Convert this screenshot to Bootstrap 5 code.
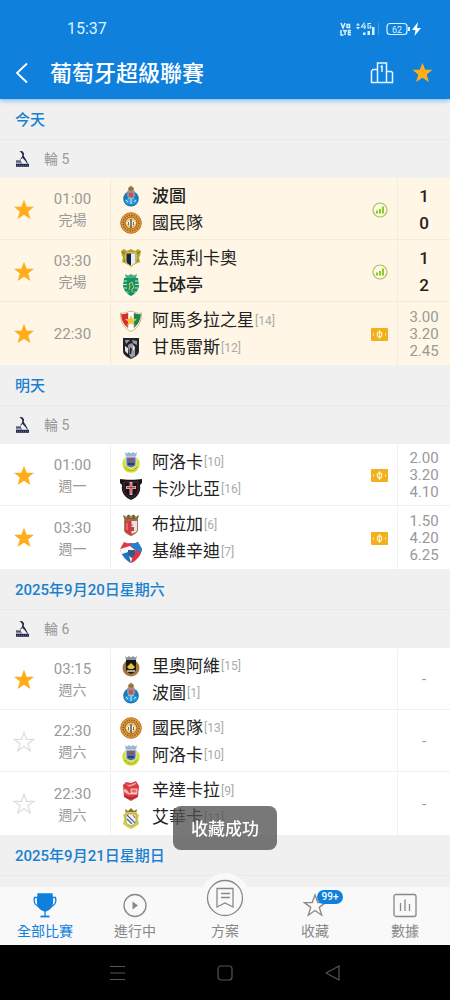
<!DOCTYPE html>
<html lang="zh-Hant">
<head>
<meta charset="utf-8">
<meta name="viewport" content="width=device-width, initial-scale=1">
<title>葡萄牙超級聯賽</title>
<link href="https://cdn.jsdelivr.net/npm/bootstrap@5.3.0/dist/css/bootstrap.min.css" rel="stylesheet">
<style>
  :root { --brand: #0f80dc; --gold: #ffae1a; --muted: #999; }
  body { font-family: Roboto, "Noto Sans CJK TC", sans-serif; color: #222; background: #f0f0f0; }
  button { border: 0; background: none; padding: 0; color: inherit; }
  svg { display: block; flex-shrink: 0; }
  a { text-decoration: none; color: inherit; }
  .topbar { background: var(--brand); color: #fff; box-shadow: 0 1px 5px #0f80dc99; padding-bottom: 1px; z-index: 2; }
  .statusbar { height: 48px; padding: 10px 28px 0 67px; font-size: 16px; color: #d9f2ff; }
  .appbar { height: 50px; padding: 0 16px 0 12px; }
  .league-title { font-size: 22px; line-height: 30px; font-weight: 500; padding-top: 2px; margin-left: 18px; }
  .league-star { color: var(--gold); }
  .day-title { height: 41px; padding: 2px 15px 0; font-size: 15px; font-weight: 500; color: #1a80cf; border-bottom: 1px solid #e9e9e9; }
  .round-line { height: 38px; padding: 0 15px; gap: 14px; font-size: 14px; color: var(--muted); }
  .match { height: 62px; padding-top: 1px; background: #fff; box-shadow: inset 0 -1px #f0f0f0; }
  .match:last-child { height: 63px; box-shadow: none; }
  .match.today { background: #fff6e6; }
  .match.today:not(:last-child) { box-shadow: inset 0 -1px #f3ebdd; }
  .star-btn { width: 48px; color: var(--gold); }
  .star-btn.off { color: #ddd; }
  .kickoff { width: 49px; margin-right: 13px; font-size: 15px; line-height: 21px; color: var(--muted); padding-top: 1px; }
  .kickoff span { font-size: 14px; }
  .sides { border-left: 1px solid #f0f0f0; padding-left: 9px; }
  .today .sides, .today .result { border-color: #f3ebdd; }
  .side { height: 27px; gap: 10px; font-size: 17px; line-height: 27px; }
  .side small { font-size: 12px; color: #aaa; margin-left: -9px; padding-top: 1px; }
  .won { font-weight: 500; }
  .tag { margin-right: 9px; }
  .result { width: 53px; border-left: 1px solid #f0f0f0; font-size: 15px; line-height: 17px; color: var(--muted); }
  .result.final { font-size: 17px; line-height: 27px; font-weight: 500; color: #222; }
  .tabs { height: 58px; background: #f9f9f9; color: #888; font-size: 14px; }
  .tab { gap: 2px; padding-top: 6px; line-height: 22px; }
  .tab.on { color: var(--brand); }
  .plan { margin-top: -20px; gap: 0; }
  .plan svg { background: #f9f9f9; border-radius: 50%; margin-bottom: -3px; }
  .count { position: absolute; left: 14px; top: -3px; background: var(--brand); color: #fff; font-size: 10px; line-height: 14px; font-weight: 500; border-radius: 7px; width: 26px; }
  .sysnav { height: 55px; background: #000; color: #555; padding: 0 108px; }
  .notice { position: fixed; left: 50%; bottom: 150px; transform: translateX(-50%); background: #505050c4; color: #fff; font-size: 17px; line-height: 24px; font-weight: 500; padding: 11px 18px 9px; border-radius: 8px; white-space: nowrap; z-index: 3; }
</style>
</head>
<body>
<svg width="0" height="0" class="position-absolute" aria-hidden="true">
  <symbol id="star" viewBox="0 0 22 22"><path fill="currentColor" d="M11 .8l2.700 7h7.300l-5.800 4.700 2.200 7.600L11 15.700l-6.400 4.400 2.200-7.600L1 7.800h7.300z"/></symbol>
  <symbol id="star-o" viewBox="0 0 22 22"><path fill="none" stroke="currentColor" stroke-width="1.200" d="M11 1.200l2.500 7.100h7.300l-5.900 4.400 2.300 7.200L11 15.600l-6.200 4.300 2.300-7.200L1.200 8.300h7.300z"/></symbol>
  <symbol id="liga" viewBox="0 0 15 18"><g fill="#20284a"><path d="M4.500 1l3 .2 1.600 2.200L8.700 6l2 3 2.300 4.500-.6.300L9.500 10 7 7.500 7.300 4z"/><path d="M7.300 6.500L4.500 10l2.500-1.500z"/><path d="M1 10.500h5v1.300H1zM1 12.500h6v.8H1z"/><path d="M1 13.800h13v3H1z"/></g><path stroke="#9aa0b8" stroke-width=".6" d="M2 15.300h11" stroke-dasharray="1 1"/></symbol>
  <symbol id="porto" viewBox="0 0 22 22"><circle cx="11" cy="13.800" r="7.800" fill="#1678bd"/><path d="M5 14.500c2-2 10-2 12 0v3c-3 3-9 3-12 0z" fill="#2f9bd6"/><path d="M6 15l2 2m3-3v5m5-4l-2 2m-6-4h6" stroke="#d9edf8" stroke-width="1"/><path d="M7.500 5.500h7l.8 5.500c-1.500 3-7 3-8.500 0z" fill="#9b8f94"/><path d="M9 8h4v4H9z" fill="#cf4e55"/><path d="M8 4c0-2 2-2.500 3-3.500C12 1.500 14 2 14 4l-.7 2H8.700z" fill="#a98545"/><path d="M9 4h4" stroke="#4c6b45"/></symbol>
  <symbol id="nacional" viewBox="0 0 22 22"><circle cx="11" cy="11" r="10.300" fill="#e7a12f" stroke="#b9742b"/><circle cx="11" cy="11" r="8" fill="none" stroke="#8c5740" stroke-width="1.500" stroke-dasharray="1.500 1"/><circle cx="11" cy="11" r="6" fill="#efc36a" stroke="#94592f"/><path d="M5.500 11l5-3v6zm11 0l-5-3v6z" fill="#fff2d4"/><path d="M11 7v9" stroke="#3d4b68" stroke-width="1.300"/><path d="M8.500 10v3m5-3v3" stroke="#3d4b68" stroke-width=".8"/></symbol>
  <symbol id="famalicao" viewBox="0 0 22 22"><path d="M1 4l3-2 3 2 4-2 4 2 3-2 3 2-1 5-1 1 1 5-5 2-4 3-4-3-5-2 1-5-1-1z" fill="#b4a32e"/><path d="M2 5l4 2m14-2l-4 2M4 14l2-1m12 1l-2-1" stroke="#6e6727"/><path d="M6 6h10v8c0 3-3 4-5 5-2-1-5-2-5-5z" fill="#18233f" stroke="#eadb63"/><path d="M11 6.500h4.500v8c0 2-2 3-4.500 4z" fill="#e7edf3"/></symbol>
  <symbol id="sporting" viewBox="0 0 22 22"><path d="M5 0l3 1.500L11 0l3 1.500L17 0l-1 4H6z" fill="#4cac80"/><path d="M4 4h14l1 8c-1 5-4 8-8 10-4-2-7-5-8-10z" fill="#149260"/><path d="M3.500 7h15M3 10.500h16M3.500 14h15M6 18h10" stroke="#d9efe5" stroke-width=".9"/><path d="M7 6h8v11l-4 3-4-3z" fill="#159260"/><path d="M9 16l1-4-1-2 3-2 1 3 1 3-2 1v3" fill="none" stroke="#d7c768" stroke-width="1"/></symbol>
  <symbol id="estrela" viewBox="0 0 22 22"><path d="M.5 3c4 1 6.500-1 10.500-2 4 1 6.500 3 10.500 2 0 8-2.500 15-10.500 18.500C3 18 .5 11 .5 3z" fill="#fff" stroke="#d6b27d"/><path d="M1.200 4c3 .5 5-.5 7-1v15C3 14.500 1.200 9 1.200 4z" fill="#d72d31"/><path d="M20.800 4c-3 .5-5-.5-7-1v15c5-3.500 7-9 7-14z" fill="#198754"/><path d="M11 5l1.800 4H17l-3.300 3 1.300 4-4-2.500L7 16l1.300-4L5 9h4.200z" fill="#f5bf42"/></symbol>
  <symbol id="vitoria" viewBox="0 0 22 22"><path d="M3 1h16v13c0 4-4 6-8 8-4-2-8-4-8-8z" fill="#222329"/><path d="M5 3h5l-4 4zm7 0l5 1v4l-4-2zM8 8l4-2 3 4v9l-4 2-2-4z" fill="#9b9ca5"/><path d="M5 9l3 2v6l-3-3zM13 8l2 3-2 3z" fill="#e1e1e5"/><path d="M10 10l2 2-1 5h-1.500z" fill="#222"/></symbol>
  <symbol id="arouca" viewBox="0 0 22 22"><circle cx="11" cy="13" r="8.700" fill="#d7df32"/><path d="M5 16c3 5 9 5 12 0" fill="none" stroke="#878f26" stroke-width="1.200" stroke-dasharray="1 1"/><path d="M5 1l2 1.500L9 1l2 1.500L13 1l2 1.500L17 1l-1 5H6z" fill="#9ab6d3"/><path d="M6 6h10v7c0 2-2 3-5 4-3-1-5-2-5-4z" fill="#536fa0" stroke="#dce6ef"/><path d="M9 7h4v3H9z" fill="#ad4a5a"/><path d="M8 12h6v2H8z" fill="#284265"/></symbol>
  <symbol id="casapia" viewBox="0 0 22 22"><path d="M0 1c5 1 17 1 22 0v4l-2 2c1 7-2 12-9 15C4 19 1 14 2 7L0 5z" fill="#171518"/><path d="M4 4h14v8c0 4-4 6-7 8-3-2-7-4-7-8z" fill="none" stroke="#67333a" stroke-width=".8"/><path d="M11 4v13M6 9.500h10" stroke="#fff" stroke-width="2.600"/><path d="M11 4.500v12M6.500 9.500h9" stroke="#cf303b" stroke-width="1.300"/></symbol>
  <symbol id="braga" viewBox="0 0 22 22"><path d="M3 1l3 1.500 2.500-2L11 2l2.500-1.500 2.500 2L19 1l-1.500 5h-13z" fill="#796238"/><path d="M5 3h2m3 0h2m3 0h2" stroke="#ddc776"/><path d="M4.500 6h13v10c0 3-4 4-6.500 6-2.500-2-6.500-3-6.500-6z" fill="#d13b3e" stroke="#a87b5b"/><path d="M11.500 7H17v9c0 2-3 3-5.500 4z" fill="#ebe2df"/><path d="M7 9v7" stroke="#e59d88"/><path d="M10 13h4v4h-4z" fill="#b94549"/><path d="M12 10v2" stroke="#6177a0"/></symbol>
  <symbol id="gil" viewBox="0 0 22 22"><path d="M4 1c3 1.500 5 1.500 7 1 2 .5 4 .5 7-1l4 7c-1 6-5 11-11 14C5 19 1 14 0 8z" fill="#df3647"/><path d="M9 2c4 1 6 .5 9-1l4 7-1 4-7-4z" fill="#1d83ca"/><path d="M0 8l10-3 6 5-5 12C5 19 1 14 0 8z" fill="#f3f6fb"/><path d="M2 13l6-2 3 11C7 20 4 17 2 13z" fill="#1976bd"/><path d="M14 9l7 3c-2 4-5 8-10 10z" fill="#df3647"/><path d="M8 9h7v5l-3.500 3L8 14z" fill="#365a88"/></symbol>
  <symbol id="rioave" viewBox="0 0 22 22"><circle cx="11" cy="13" r="8.500" fill="#a9743b"/><path d="M5 1l2 1.500L9 1l2 1.500L13 1l2 1.500L17 1l-1 4H6z" fill="#8c939b"/><path d="M6 5h10v9c0 3-3 4-5 5-2-1-5-2-5-5z" fill="#171814"/><path d="M7 12l4-4 4 4-2 2H9z" fill="#e7c63d"/><path d="M7 16h8" stroke="#d9d9c9" stroke-width="1.500"/></symbol>
  <symbol id="santaclara" viewBox="0 0 22 22"><path d="M3 5l3-3 5 1 5-2 3 5-1 11-7 4-7-4z" fill="#d83c43"/><path d="M5 3l3 2 4-1 5-2-2 3-6 2z" fill="#f19493"/><path d="M4 9c3 0 4 2 5 4h8v1.500H8L4 12z" fill="#f6b3b1"/><path d="M11 9h6v4h-6z" fill="#ed6a6b" stroke="#fff" stroke-width=".7"/><path d="M5 16c4 3 8 3 12 0" stroke="#a9252d" fill="none" stroke-width="1.500"/></symbol>
  <symbol id="alverca" viewBox="0 0 22 22"><path d="M5 2l3 2 3-3 3 3 3-2-1 5H6z" fill="#8d7136"/><path d="M3 8l3-3h10l3 3-1 4 1 5-4 3-4 2-4-2-4-3 1-5z" fill="#d8cf45"/><path d="M6 7h10v8c0 2-3 3-5 4-2-1-5-2-5-4z" fill="#f6f6f2" stroke="#aaa169"/><path d="M7 8l8 8m-8-4l5 5" stroke="#4569a4" stroke-width="1.200"/><path d="M13 8l2 3" stroke="#c5534d" stroke-width="1.200"/></symbol>
  <symbol id="stats" viewBox="0 0 16 16"><circle cx="8" cy="8" r="7" fill="none" stroke="#9fc75c" stroke-width="1.200"/><path d="M5 11.500v-3M8 11.500V7M11 11.500v-7" stroke="#83cf28" stroke-width="2"/></symbol>
  <symbol id="odds" viewBox="0 0 17 13"><rect width="17" height="13" rx="1" fill="#f2b01c"/><ellipse cx="8.500" cy="6.500" rx="2.200" ry="2.700" fill="none" stroke="#fff1c8" stroke-width="1.200"/><path d="M8.500 2v9M2.500 5.500v2m12-2v2" stroke="#fff1c8"/></symbol>
</svg>

<div class="vh-100 d-flex flex-column overflow-hidden">
  <header class="topbar flex-shrink-0 position-relative">
    <div class="statusbar d-flex align-items-center justify-content-between">
      <span>15:37</span>
      <svg width="83" height="16" viewBox="0 0 83 16" fill="none" stroke="#d9f2ff" aria-hidden="true">
        <path stroke-width="1.500" d="M2 2l2 5 2-5M8 3.500h2.500v3H8zM2 9v5h2.500M4 9.700h4M6 9.700V14M12 9.500H9.500v4.200H12M9.500 11.600H12"/>
        <path fill="#d9f2ff" stroke="none" d="M17 4.500l2-2.500 2 2.500zM17 6l2 2.500L21 6zM24 11.500h2.500V14H24zM28.500 10H31v4h-2.500zM33 6h2.500v8H33z"/>
        <path d="M25.500 1.500L22.500 6H27M25.800 3.500V8M32 2.500h-3V7h2.700V5H30.500" stroke-width="1.100"/>
        <path d="M39.500 2v12" opacity=".25"/>
        <rect x="48" y="2.500" width="20" height="11" rx="3" stroke-width="1.200"/><path d="M70 6v4" stroke-width="2"/>
        <text x="58" y="11.500" font-size="9" text-anchor="middle" fill="#d9f2ff" stroke="none">62</text>
        <path fill="#fff" stroke="none" d="M79 1l-6 8h3.500L75.500 15 82 7h-4z"/>
      </svg>
    </div>
    <div class="appbar d-flex align-items-center">
      <button aria-label="返回"><svg width="20" height="24" viewBox="0 0 20 24" fill="none" stroke="#fff" stroke-width="1.800"><path d="M15 2.500L5 12l10 9.500"/></svg></button>
      <h1 class="league-title mb-0 me-auto">葡萄牙超級聯賽</h1>
      <button class="me-3" aria-label="積分榜"><svg width="26" height="24" viewBox="0 0 26 24" fill="none" stroke="#e5f6ff" stroke-width="1.500"><path d="M8.500 21.500V2h9v19.500M8.500 8.500H4L2.500 10v11.500h21V11.500L22 10.500h-4.500M13 11V5l-1.500 1"/></svg></button>
      <button class="league-star" aria-label="收藏聯賽"><svg width="23" height="22"><use href="#star"/></svg></button>
    </div>
  </header>

  <main id="fixtures" class="flex-grow-1 overflow-hidden"></main>

  <nav class="tabs d-flex flex-shrink-0 position-relative">
    <a href="#" class="tab on col d-flex flex-column align-items-center">
      <svg width="24" height="25" viewBox="0 0 24 25" fill="none" stroke="currentColor" stroke-width="1.300"><path fill="currentColor" d="M5 1h14c0 3 .5 5 .5 8 0 5-3 8-7.500 9-4.500-1-7.500-4-7.500-9C4.500 6 5 4 5 1z"/><path d="M4.500 4.500H1.500c-1 4-.5 7 4 9M19.500 4.500h3c1 4 .5 7-4 9M12 17v6"/><path stroke-width="1.800" d="M7.500 23.500h9"/></svg>
      全部比賽</a>
    <a href="#" class="tab col d-flex flex-column align-items-center">
      <svg width="24" height="25" viewBox="0 0 24 25"><circle cx="12" cy="12.500" r="11" fill="none" stroke="currentColor" stroke-width="1.300"/><path fill="currentColor" d="M9.500 8.500l5.500 4-5.500 4z"/></svg>
      進行中</a>
    <a href="#" class="tab plan col d-flex flex-column align-items-center">
      <svg width="50" height="50" viewBox="0 0 50 50" fill="none" stroke="currentColor" stroke-width="1.300"><circle cx="25" cy="25" r="17.500"/><path d="M17 15.500h16V34l-8-4-8 4zM21 20.500h9M21 24.500h9"/></svg>
      方案</a>
    <a href="#" class="tab col d-flex flex-column align-items-center">
      <span class="position-relative"><svg width="24" height="25" viewBox="0 0 22 22"><use href="#star-o"/></svg><span class="count text-center">99+</span></span>
      收藏</a>
    <a href="#" class="tab col d-flex flex-column align-items-center">
      <svg width="24" height="25" viewBox="0 0 24 25" fill="none" stroke="currentColor" stroke-width="1.300"><rect x="1" y="1.500" width="22" height="22" rx="2"/><path d="M7.500 10v8M12 6.500V18M16.500 11v7"/></svg>
      數據</a>
  </nav>
  <div class="sysnav d-flex flex-shrink-0 align-items-center justify-content-between">
    <button aria-label="選單"><svg width="18" height="18" viewBox="0 0 18 18" stroke="currentColor" stroke-width="1.200"><path d="M2 2.500h15M2 9h15M2 15.500h15"/></svg></button>
    <button aria-label="主畫面"><svg width="18" height="18" viewBox="0 0 18 18" fill="none" stroke="currentColor" stroke-width="1.200"><rect x="2" y="2" width="14" height="14" rx="3"/></svg></button>
    <button aria-label="上一頁"><svg width="18" height="18" viewBox="0 0 18 18" fill="none" stroke="currentColor" stroke-width="1.200"><path stroke-linejoin="round" d="M2 9l13-7v14z"/></svg></button>
  </div>
</div>
<div class="notice" role="status">收藏成功</div>

<script src="https://cdn.jsdelivr.net/npm/bootstrap@5.3.0/dist/js/bootstrap.bundle.min.js"></script>
<script>
  // side: [crest, name, rank, winner]
  const days = [
    { title: '今天', round: '輪 5', today: true, matches: [
      { time: '01:00', note: '完場', fav: true, tag: 'stats', final: true, result: ['1', '0'], sides: [['porto', '波圖', 0, true], ['nacional', '國民隊']] },
      { time: '03:30', note: '完場', fav: true, tag: 'stats', final: true, result: ['1', '2'], sides: [['famalicao', '法馬利卡奧'], ['sporting', '士砵亭', 0, true]] },
      { time: '22:30', note: '', fav: true, tag: 'odds', result: ['3.00', '3.20', '2.45'], sides: [['estrela', '阿馬多拉之星', 14], ['vitoria', '甘馬雷斯', 12]] } ] },
    { title: '明天', round: '輪 5', matches: [
      { time: '01:00', note: '週一', fav: true, tag: 'odds', result: ['2.00', '3.20', '4.10'], sides: [['arouca', '阿洛卡', 10], ['casapia', '卡沙比亞', 16]] },
      { time: '03:30', note: '週一', fav: true, tag: 'odds', result: ['1.50', '4.20', '6.25'], sides: [['braga', '布拉加', 6], ['gil', '基維辛迪', 7]] } ] },
    { title: '2025年9月20日星期六', round: '輪 6', matches: [
      { time: '03:15', note: '週六', fav: true, result: ['-'], sides: [['rioave', '里奧阿維', 15], ['porto', '波圖', 1]] },
      { time: '22:30', note: '週六', result: ['-'], sides: [['nacional', '國民隊', 13], ['arouca', '阿洛卡', 10]] },
      { time: '22:30', note: '週六', result: ['-'], sides: [['santaclara', '辛達卡拉', 9], ['alverca', '艾華卡', 11]] } ] },
    { title: '2025年9月21日星期日', round: '', matches: [] }
  ];
  const icon = (id, w, h, cls = '') => `<svg class="${cls}" width="${w}" height="${h}"><use href="#${id}"/></svg>`;
  const side = ([crest, name, rank, won]) =>
    `<div class="side d-flex align-items-center ${won ? 'won' : ''}">${icon(crest, 22, 22)}${name}${rank ? `<small>[${rank}]</small>` : ''}</div>`;
  const match = (m, today) => `
    <article class="match d-flex ${today ? 'today' : ''}">
      <button class="star-btn ${m.fav ? '' : 'off'} d-flex align-items-center justify-content-center" aria-label="收藏">${icon(m.fav ? 'star' : 'star-o', 22, 22)}</button>
      <div class="kickoff d-flex flex-column justify-content-center text-center">${m.time}${m.note ? `<span>${m.note}</span>` : ''}</div>
      <div class="sides flex-grow-1 d-flex flex-column justify-content-center">${m.sides.map(side).join('')}</div>
      ${m.tag ? icon(m.tag, m.tag === 'odds' ? 17 : 16, m.tag === 'odds' ? 13 : 16, 'tag align-self-center') : ''}
      <div class="result ${m.final ? 'final' : ''} d-flex flex-column justify-content-center text-center">${m.result.map(r => `<span>${r}</span>`).join('')}</div>
    </article>`;
  document.getElementById('fixtures').innerHTML = days.map(d => `
    <section>
      <h2 class="day-title d-flex align-items-center mb-0">${d.title}</h2>
      <div class="round-line d-flex align-items-center">${icon('liga', 15, 18)}${d.round}</div>
      <div>${d.matches.map(m => match(m, d.today)).join('')}</div>
    </section>`).join('');
</script>
</body>
</html>
